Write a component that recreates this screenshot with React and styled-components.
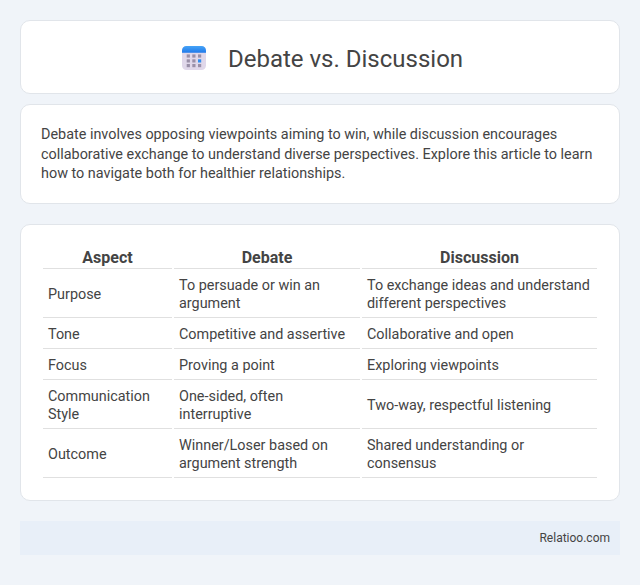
import styled, { createGlobalStyle } from 'styled-components';

const Global = createGlobalStyle`
  html, body { margin: 0; padding: 0; }
  body {
    background: #f0f4f9;
    font-family: Roboto, "Liberation Sans", sans-serif;
    color: #444;
  }
`;

const Page = styled.div`
  padding: 20px;
  display: flex;
  flex-direction: column;
`;

const Card = styled.div`
  background: #fff;
  border: 1px solid #e1e5ea;
  border-radius: 10px;
  box-sizing: border-box;
  margin-bottom: 20px;
`;

const Header = styled(Card)`
  height: 74px;
  margin-bottom: 10px;
  padding: 4px 0 0 3px;
  display: flex;
  align-items: center;
  justify-content: center;
  gap: 20px;
`;

const Title = styled.h1`
  margin: 0;
  font-size: 24px;
  font-weight: 400;
  color: #444;
`;

const Icon = styled.svg`
  width: 28px;
  height: 28px;
  margin-top: -2px;
`;

const Intro = styled(Card)`
  padding: 20px;
  font-size: 14.4px;
  line-height: 19.5px;
  height: 100px;
`;

const TableCard = styled(Card)`
  padding: 20px;
  height: 277px;
`;

const Table = styled.table`
  width: 100%;
  border-collapse: separate;
  border-spacing: 2px;
  font-size: 14.4px;
  line-height: 18px;
`;

const Th = styled.th`
  font-size: 16px;
  font-weight: 700;
  padding: 1px 0 0;
  height: 20px;
  line-height: 20px;
  text-align: center;
  border-bottom: 1px solid #e0e0e0;
  width: ${({ $w }) => $w}px;
`;

const Td = styled.td`
  padding: 6px 5px 4px;
  border-bottom: 1px solid #e0e0e0;
`;

const Footer = styled.div`
  height: 34px;
  background: #e8eff8;
  display: flex;
  align-items: center;
  justify-content: flex-end;
  padding: 0 10px;
  font-size: 12px;
  color: #444;
`;

const rows = [
  ['Purpose', 'To persuade or win an argument', 'To exchange ideas and understand different perspectives'],
  ['Tone', 'Competitive and assertive', 'Collaborative and open'],
  ['Focus', 'Proving a point', 'Exploring viewpoints'],
  ['Communication Style', 'One-sided, often interruptive', 'Two-way, respectful listening'],
  ['Outcome', 'Winner/Loser based on argument strength', 'Shared understanding or consensus'],
];

function CalendarIcon() {
  return (
    <Icon viewBox="0 0 28 28">
      <defs>
        <linearGradient id="calTop" x1="0" y1="0" x2="0" y2="1">
          <stop offset="0" stopColor="#45a4f7" />
          <stop offset="1" stopColor="#2079ea" />
        </linearGradient>
      </defs>
      <rect x="2" y="2" width="24" height="24" rx="4.5" fill="#e0d8ea" />
      <path d="M2 8.7V6.5A4.5 4.5 0 0 1 6.5 2h15A4.5 4.5 0 0 1 26 6.5v2.2z" fill="url(#calTop)" />
      {[10.4, 15.3, 20].map((y) =>
        [6.7, 12.3, 18].map((x) => (
          <rect
            key={`${x}-${y}`}
            x={x}
            y={y}
            width="3.2"
            height="3.2"
            fill={x === 18 && y === 15.3 ? '#2f8df0' : '#9a90a8'}
          />
        ))
      )}
    </Icon>
  );
}

export default function App() {
  return (
    <Page>
      <Global />
      <Header>
        <CalendarIcon />
        <Title>Debate vs. Discussion</Title>
      </Header>
      <Intro>
        Debate involves opposing viewpoints aiming to win, while discussion encourages collaborative exchange to
        understand diverse perspectives. Explore this article to learn how to navigate both for healthier relationships.
      </Intro>
      <TableCard>
        <Table>
          <thead>
            <tr>
              <Th $w={129}>Aspect</Th>
              <Th $w={186}>Debate</Th>
              <Th>Discussion</Th>
            </tr>
          </thead>
          <tbody>
            {rows.map((r) => (
              <tr key={r[0]}>
                {r.map((c) => (
                  <Td key={c}>{c}</Td>
                ))}
              </tr>
            ))}
          </tbody>
        </Table>
      </TableCard>
      <Footer>Relatioo.com</Footer>
    </Page>
  );
}
